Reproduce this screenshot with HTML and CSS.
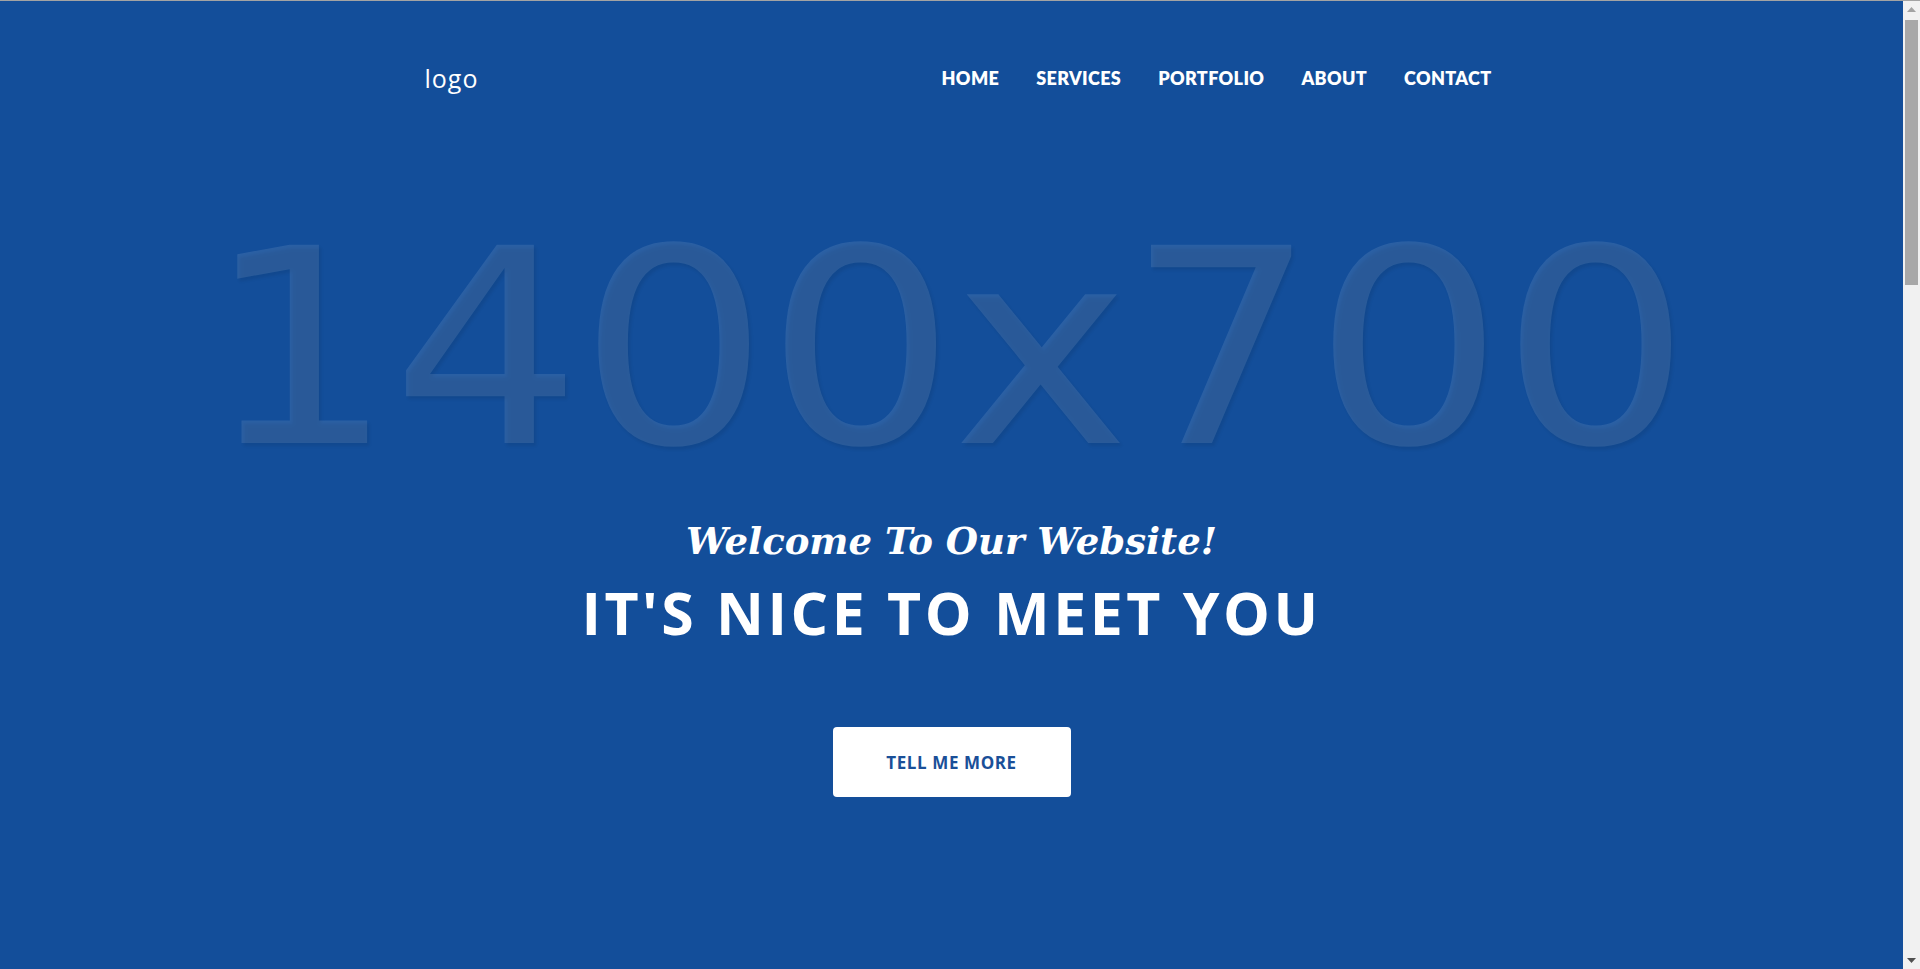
FILE: index.html
```html
<!DOCTYPE html>
<html lang="en">
<head>
<meta charset="utf-8">
<title>Agency</title>
<link rel="stylesheet" href="styles.css">
</head>
<body>
<main class="page">
  <section class="hero">
    <div class="placeholder" aria-hidden="true">1400x700</div>
    <header class="topbar">
      <div class="container bar">
        <a class="logo" href="#">logo</a>
        <nav class="nav">
          <a href="#">HOME</a>
          <a href="#">SERVICES</a>
          <a href="#">PORTFOLIO</a>
          <a href="#">ABOUT</a>
          <a href="#">CONTACT</a>
        </nav>
      </div>
    </header>
    <div class="intro">
      <div class="lead-in">Welcome To Our Website!</div>
      <h1 class="intro-heading">IT'S NICE TO MEET YOU</h1>
      <a class="btn" href="#">TELL ME MORE</a>
    </div>
  </section>
</main>
<div class="scrollbar" aria-hidden="true">
  <div class="sb-btn">
    <svg width="9" height="5" viewBox="0 0 9 5"><polygon points="0,5 9,5 4.5,0" fill="#a3a3a3"/></svg>
  </div>
  <div class="sb-thumb"></div>
  <div class="sb-track"></div>
  <div class="sb-btn">
    <svg width="9" height="5" viewBox="0 0 9 5"><polygon points="0,0 9,0 4.5,5" fill="#505050"/></svg>
  </div>
</div>
</body>
</html>
```
FILE: styles.css
```css
html {
  overflow: hidden;
}
body {
  margin: 0;
  height: 968px;
  border-top: 1px solid #a3a3a3;
  display: flex;
  font-family: "Open Sans", sans-serif;
  background: #134e9a;
}
.page {
  flex: 1;
  min-width: 0;
  overflow: hidden;
}
.hero {
  position: relative;
  overflow: hidden;
  background: #134e9a;
  height: 968px;
}
.placeholder {
  position: absolute;
  left: 0;
  right: 0;
  top: 212px;
  padding-right: 10px;
  text-align: center;
  font-family: "DejaVu Sans", sans-serif;
  font-size: 272px;
  line-height: 272px;
  letter-spacing: -3px;
  color: rgba(255, 255, 255, 0.1);
  text-shadow: 2px 3px 3px rgba(0, 0, 0, 0.08);
  white-space: nowrap;
  transform: scaleX(1.1);
  transform-origin: center;
}
.topbar {
  position: relative;
  padding-top: 59px;
}
.container {
  width: 1110px;
  margin: 0 auto;
  padding: 0 15px;
}
.bar {
  display: flex;
  justify-content: space-between;
  align-items: center;
  height: 36px;
}
.logo {
  padding-left: 28px;
  font-family: "Open Sans", sans-serif;
  font-size: 25px;
  letter-spacing: 1px;
  color: #fff;
  text-decoration: none;
}
.nav {
  display: flex;
}
.nav a {
  padding: 0 18.5px;
  font-family: "Lato", sans-serif;
  font-weight: 800;
  font-size: 18px;
  letter-spacing: 0.35px;
  color: #fff;
  text-decoration: none;
}
.nav a:last-child {
  padding-right: 15px;
}
.intro {
  position: relative;
  display: flex;
  flex-direction: column;
  align-items: center;
  padding-top: 425px;
  text-align: center;
  color: #fff;
}
.lead-in {
  font-family: "DejaVu Serif", serif;
  font-style: italic;
  font-weight: 700;
  font-size: 37px;
  line-height: 41px;
}
.intro-heading {
  margin: 21px 0 0;
  font-family: "Open Sans", sans-serif;
  font-weight: 700;
  font-size: 59px;
  line-height: 59px;
  letter-spacing: 3.5px;
}
.btn {
  margin-top: 85px;
  width: 238px;
  height: 70px;
  display: flex;
  align-items: center;
  justify-content: center;
  background: #fff;
  border-radius: 4px;
  color: #1a4f98;
  font-family: "Open Sans", sans-serif;
  font-weight: 700;
  font-size: 17px;
  letter-spacing: 0.6px;
  text-decoration: none;
}
.scrollbar {
  width: 17px;
  flex: none;
  display: flex;
  flex-direction: column;
  background: #f1f1f1;
}
.sb-btn {
  height: 17px;
  display: flex;
  align-items: center;
  justify-content: center;
}
.sb-thumb {
  height: 265px;
  margin: 2px 2px 0;
  background: #a8a8a8;
}
.sb-track {
  flex: 1;
}
```
